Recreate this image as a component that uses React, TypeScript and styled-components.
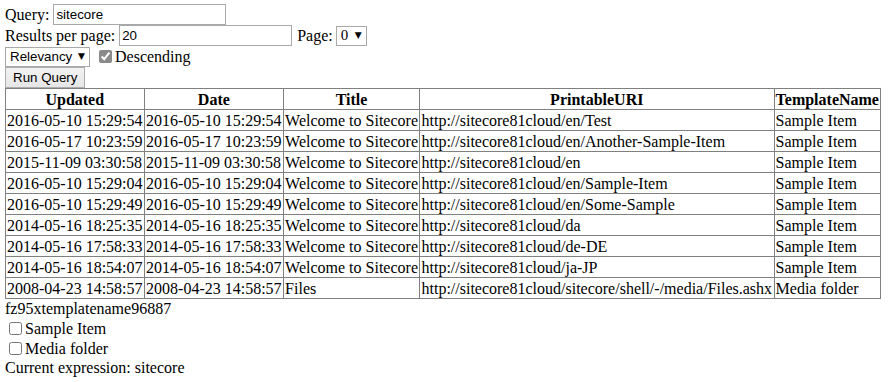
import React from "react";
import styled, { createGlobalStyle } from "styled-components";

const Global = createGlobalStyle`
  html, body { margin: 0; padding: 0; background: #fff; }
  body { font-family: "Liberation Serif", "Times New Roman", serif; font-size: 16px; color: #000; }
`;

const Page = styled.div`
  padding: 4px 5px;
  line-height: 19px;
`;

const Line = styled.div`
  display: flex;
  align-items: center;
  height: 21px;
  white-space: nowrap;
`;

const TextInput = styled.input`
  box-sizing: border-box;
  height: 21px;
  border: 1px solid #a9a9a9;
  padding: 1px 2px;
  font-family: "Liberation Sans", Arial, sans-serif;
  font-size: 13.33px;
  margin: 0 0 0 4px;
  width: ${(p: { w: number }) => p.w}px;
  outline: none;
`;

const FakeSelect = styled.div<{ serif?: boolean; w: number }>`
  box-sizing: border-box;
  height: 20px;
  width: ${(p) => p.w}px;
  border: 1px solid #a9a9a9;
  display: flex;
  align-items: center;
  justify-content: space-between;
  padding: 0 4px 0 4px;
  font-family: ${(p) => (p.serif ? '"Liberation Serif", serif' : '"Liberation Sans", Arial, sans-serif')};
  font-size: ${(p) => (p.serif ? "15px" : "13.33px")};
  background: #fff;
`;

const Arrow = styled.span`
  font-size: 9px;
  font-family: "DejaVu Sans", sans-serif;
`;

const Label = styled.span<{ ml?: number }>`
  margin-left: ${(p) => p.ml ?? 0}px;
  margin-right: 3px;
`;

const Check = styled.input<{ ml?: number }>`
  width: 13px;
  height: 13px;
  margin: 0 3px 0 ${(p) => p.ml ?? 4}px;
  accent-color: #8a8a8a;
`;

const Button = styled.button`
  box-sizing: border-box;
  height: 21px;
  padding: 0 7px;
  border: 1px solid #adadad;
  background: linear-gradient(#f2f2f2, #e6e6e6);
  font-family: "Liberation Sans", Arial, sans-serif;
  font-size: 13.33px;
  color: #000;
`;

const Table = styled.table`
  border-collapse: collapse;
  border: 1px solid #808080;
  margin-top: 0;
`;

const Th = styled.th`
  border: 1px solid #808080;
  padding: 0 1.5px 0 1px;
  height: 20px;
  font-weight: bold;
  white-space: nowrap;
`;

const Td = styled.td`
  border: 1px solid #808080;
  padding: 0 1.5px 0 1px;
  height: 20px;
  white-space: nowrap;
  text-align: left;
`;

const CheckRow = styled.label`
  display: flex;
  align-items: center;
  height: 20px;
`;

const rows = [
  ["2016-05-10 15:29:54", "2016-05-10 15:29:54", "Welcome to Sitecore", "http://sitecore81cloud/en/Test", "Sample Item"],
  ["2016-05-17 10:23:59", "2016-05-17 10:23:59", "Welcome to Sitecore", "http://sitecore81cloud/en/Another-Sample-Item", "Sample Item"],
  ["2015-11-09 03:30:58", "2015-11-09 03:30:58", "Welcome to Sitecore", "http://sitecore81cloud/en", "Sample Item"],
  ["2016-05-10 15:29:04", "2016-05-10 15:29:04", "Welcome to Sitecore", "http://sitecore81cloud/en/Sample-Item", "Sample Item"],
  ["2016-05-10 15:29:49", "2016-05-10 15:29:49", "Welcome to Sitecore", "http://sitecore81cloud/en/Some-Sample", "Sample Item"],
  ["2014-05-16 18:25:35", "2014-05-16 18:25:35", "Welcome to Sitecore", "http://sitecore81cloud/da", "Sample Item"],
  ["2014-05-16 17:58:33", "2014-05-16 17:58:33", "Welcome to Sitecore", "http://sitecore81cloud/de-DE", "Sample Item"],
  ["2014-05-16 18:54:07", "2014-05-16 18:54:07", "Welcome to Sitecore", "http://sitecore81cloud/ja-JP", "Sample Item"],
  ["2008-04-23 14:58:57", "2008-04-23 14:58:57", "Files", "http://sitecore81cloud/sitecore/shell/-/media/Files.ashx", "Media folder"],
];

export default function App() {
  return (
    <>
      <Global />
      <Page>
        <Line>
          <span>Query:</span>
          <TextInput w={173} defaultValue="sitecore" />
        </Line>
        <Line>
          <span>Results per page:</span>
          <TextInput w={173} defaultValue="20" />
          <Label ml={5}>Page:</Label>
          <FakeSelect serif w={31}>
            <span>0</span>
            <Arrow>▼</Arrow>
          </FakeSelect>
        </Line>
        <Line>
          <FakeSelect w={85}>
            <span>Relevancy</span>
            <Arrow>▼</Arrow>
          </FakeSelect>
          <Check type="checkbox" defaultChecked ml={9} />
          <span>Descending</span>
        </Line>
        <Line>
          <Button>Run Query</Button>
        </Line>
        <Table>
          <thead>
            <tr>
              <Th>Updated</Th>
              <Th>Date</Th>
              <Th>Title</Th>
              <Th>PrintableURI</Th>
              <Th>TemplateName</Th>
            </tr>
          </thead>
          <tbody>
            {rows.map((r, i) => (
              <tr key={i}>
                {r.map((c, j) => (
                  <Td key={j}>{c}</Td>
                ))}
              </tr>
            ))}
          </tbody>
        </Table>
        <div>fz95xtemplatename96887</div>
        <CheckRow>
          <Check type="checkbox" />
          <span>Sample Item</span>
        </CheckRow>
        <CheckRow>
          <Check type="checkbox" />
          <span>Media folder</span>
        </CheckRow>
        <div>Current expression: sitecore</div>
      </Page>
    </>
  );
}
